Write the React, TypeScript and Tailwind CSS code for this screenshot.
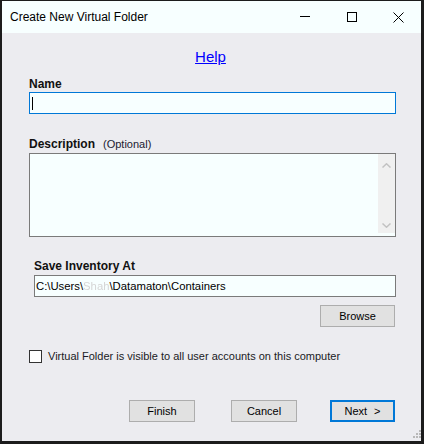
export default function App() {
  return (
    <div className="w-[424px] h-[444px] flex flex-col border-t border-l-2 border-r-[3px] border-b-[3px] border-[#1c1c1c] font-['Liberation_Sans',Arial,sans-serif] text-[#111111]">
      {/* Title bar */}
      <div className="h-[32px] shrink-0 flex items-center bg-[#f7ffff]">
        <span className="pl-[8px] text-[12px] leading-[14px] text-black">Create New Virtual Folder</span>
        <div className="ml-auto flex h-full">
          <div className="w-[46px] h-full flex items-center justify-center pr-[3px]">
            <svg width="10" height="10" viewBox="0 0 10 10">
              <line x1="0" y1="4.5" x2="10" y2="4.5" stroke="#000" strokeWidth="1" />
            </svg>
          </div>
          <div className="w-[46px] h-full flex items-center justify-center">
            <svg width="10" height="10" viewBox="0 0 10 10">
              <rect x="0.5" y="0.5" width="9" height="9" fill="none" stroke="#000" strokeWidth="1" />
            </svg>
          </div>
          <div className="w-[46px] h-full flex items-center justify-center">
            <svg width="11" height="11" viewBox="0 0 11 11">
              <line x1="0.5" y1="0.5" x2="10.5" y2="10.5" stroke="#000" strokeWidth="1" />
              <line x1="10.5" y1="0.5" x2="0.5" y2="10.5" stroke="#000" strokeWidth="1" />
            </svg>
          </div>
        </div>
      </div>

      {/* Body */}
      <div className="relative flex-1 flex flex-col bg-[#ececf0] pl-[27px] pr-[25px] pt-[15px]">
        <div className="text-center pr-[4px] text-[15px] leading-[18px] text-[#0000ff] underline">Help</div>

        <div className="mt-[11px] text-[12px] leading-[14px] font-bold">Name</div>
        <div className="mt-[1px] h-[22px] border border-[#0078d7] bg-[#f7ffff] flex items-center pl-[2px]">
          <div className="w-[1px] h-[13px] bg-black" />
        </div>

        <div className="mt-[23px] flex items-baseline">
          <span className="text-[12px] leading-[14px] font-bold">Description</span>
          <span className="ml-[8px] text-[11px] leading-[14px] text-[#202030]">(Optional)</span>
        </div>
        <div className="mt-[2px] h-[84px] border border-[#7a7a7a] bg-[#f7ffff] flex justify-end">
          <div className="w-[17px] mb-[3px] bg-[#f0f0f0] flex flex-col justify-between items-center pt-[9px] pb-[5px]">
            <svg width="9" height="5" viewBox="0 0 9 5">
              <polyline points="0.5,4.5 4.5,0.8 8.5,4.5" fill="none" stroke="#c2c2c2" strokeWidth="1.5" />
            </svg>
            <svg width="9" height="5" viewBox="0 0 9 5">
              <polyline points="0.5,0.5 4.5,4.2 8.5,0.5" fill="none" stroke="#c2c2c2" strokeWidth="1.5" />
            </svg>
          </div>
        </div>

        <div className="ml-[5px] flex flex-col">
          <div className="mt-[22px] text-[12px] leading-[14px] font-bold">Save Inventory At</div>
          <div className="mt-[2px] h-[22px] border border-[#7a7a7a] bg-[#f7ffff] flex items-center pl-[1px] text-[11.3px] leading-[13px] text-black whitespace-nowrap">
            <span>{"C:\\Users\\"}</span>
            <span className="text-[#d6d6d6] blur-[0.4px]">Shah</span>
            <span>{"\\Datamaton\\Containers"}</span>
          </div>
          <div className="self-end mr-[1px] mt-[8px] w-[75px] h-[22px] bg-[#e1e1e1] border border-[#adadad] flex items-center justify-center text-[11px] leading-[13px] text-black">
            Browse
          </div>
        </div>

        <div className="mt-[23px] h-[13px] flex items-center">
          <div className="w-[13px] h-[13px] border border-[#333333] bg-white shrink-0" />
          <span className="ml-[6px] text-[11px] leading-[13px] text-[#1a1a24] whitespace-nowrap">
            Virtual Folder is visible to all user accounts on this computer
          </span>
        </div>

        <div className="mt-[37px] flex justify-end pr-[1px]">
          <div className="w-[66px] h-[22px] mr-[36px] bg-[#e1e1e1] border border-[#adadad] flex items-center justify-center text-[11px] leading-[13px] text-black">
            Finish
          </div>
          <div className="w-[66px] h-[22px] mr-[33px] bg-[#e1e1e1] border border-[#adadad] flex items-center justify-center text-[11px] leading-[13px] text-black">
            Cancel
          </div>
          <div className="w-[65px] h-[22px] bg-[#e1e1e1] border-2 border-[#0078d7] flex items-center justify-center text-[11px] leading-[13px] text-black">
            <span>Next</span>
            <span className="ml-[7px]">&gt;</span>
          </div>
        </div>

        <svg className="absolute right-0 bottom-[3px]" width="8" height="8" viewBox="0 0 8 8">
          <rect x="6" y="0" width="2" height="2" fill="#b8b8b8" />
          <rect x="3" y="3" width="2" height="2" fill="#b8b8b8" />
          <rect x="6" y="3" width="2" height="2" fill="#b8b8b8" />
          <rect x="0" y="6" width="2" height="2" fill="#b8b8b8" />
          <rect x="3" y="6" width="2" height="2" fill="#b8b8b8" />
          <rect x="6" y="6" width="2" height="2" fill="#b8b8b8" />
        </svg>
      </div>
    </div>
  );
}
